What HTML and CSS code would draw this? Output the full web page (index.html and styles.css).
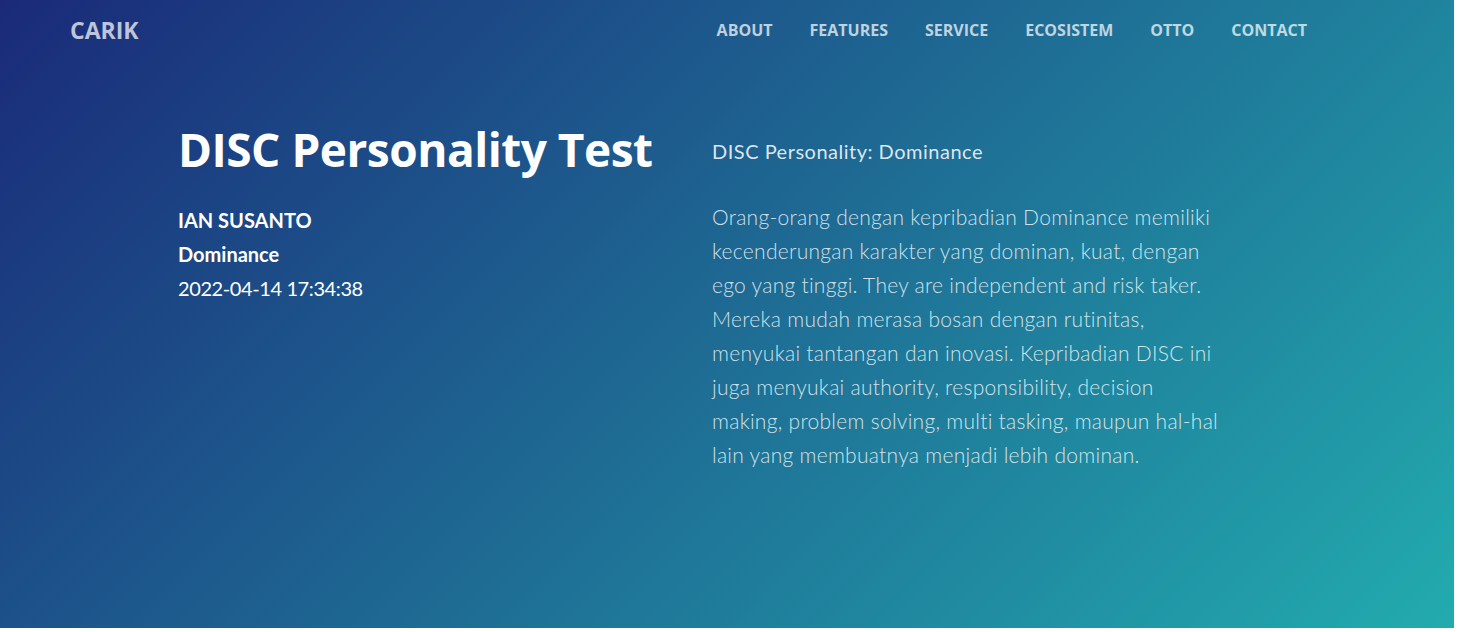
FILE: index.html
```html
<!DOCTYPE html>
<html lang="id">
<head>
<meta charset="utf-8">
<title>CARIK - DISC Personality Test</title>
<link rel="stylesheet" href="styles.css">
</head>
<body>
<section class="hero">
  <header class="topbar">
    <a class="brand" href="#">CARIK</a>
    <nav class="menu">
      <a href="#">ABOUT</a>
      <a href="#">FEATURES</a>
      <a href="#">SERVICE</a>
      <a href="#">ECOSISTEM</a>
      <a href="#">OTTO</a>
      <a href="#">CONTACT</a>
    </nav>
  </header>
  <main class="content">
    <div class="col-left">
      <h1 class="title">DISC Personality Test</h1>
      <div class="info">
        <div class="info-name">IAN SUSANTO</div>
        <div class="info-type">Dominance</div>
        <div class="info-date">2022-04-14 17:34:38</div>
      </div>
    </div>
    <div class="col-right">
      <h2 class="result-title">DISC Personality: Dominance</h2>
      <p class="result-text">Orang-orang dengan kepribadian Dominance memiliki kecenderungan karakter yang dominan, kuat, dengan ego yang tinggi. They are independent and risk taker. Mereka mudah merasa bosan dengan rutinitas, menyukai tantangan dan inovasi. Kepribadian DISC ini juga menyukai authority, responsibility, decision making, problem solving, multi tasking, maupun hal-hal lain yang membuatnya menjadi lebih dominan.</p>
    </div>
  </main>
</section>
</body>
</html>
```

FILE: styles.css
```css
* { box-sizing: border-box; }
html, body { margin: 0; padding: 0; background: #fff; }
body { font-family: "Lato", "Liberation Sans", sans-serif; }

.hero {
  width: 1454px;
  height: 628px;
  background: linear-gradient(135deg, #1a2a79 0%, #22abae 100%);
  color: #fff;
}

.topbar {
  height: 60px;
  display: flex;
  align-items: center;
  padding: 0 147px 0 70px;
}
.brand {
  font-family: "Open Sans", sans-serif;
  font-weight: 700;
  font-size: 23px;
  color: rgba(255,255,255,0.72);
  text-decoration: none;
}
.menu {
  margin-left: auto;
  display: flex;
  gap: 37px;
}
.menu a {
  font-family: "Open Sans", sans-serif;
  font-weight: 700;
  font-size: 16px;
  color: rgba(255,255,255,0.72);
  text-decoration: none;
}

.content {
  display: grid;
  grid-template-columns: 534px 520px;
  margin-left: 178px;
  padding-top: 60px;
}
.title {
  margin: 0;
  font-family: "Open Sans", sans-serif;
  font-weight: 700;
  font-size: 46px;
  line-height: 58px;
  letter-spacing: -0.5px;
}
.info {
  margin-top: 25px;
  font-size: 20px;
  line-height: 34px;
}
.info-name, .info-type { font-weight: 700; }
.info-date { font-weight: 400; letter-spacing: -0.4px; }

.result-title {
  margin: 14px 0 0;
  font-size: 20px;
  line-height: 34px;
  font-weight: 400;
  letter-spacing: 0.5px;
  color: rgba(255,255,255,0.85);
}
.result-text {
  margin: 32px 0 0;
  font-size: 21px;
  line-height: 34px;
  font-weight: 300;
  letter-spacing: 0.28px;
  color: rgba(255,255,255,0.8);
  width: 510px;
}
```
